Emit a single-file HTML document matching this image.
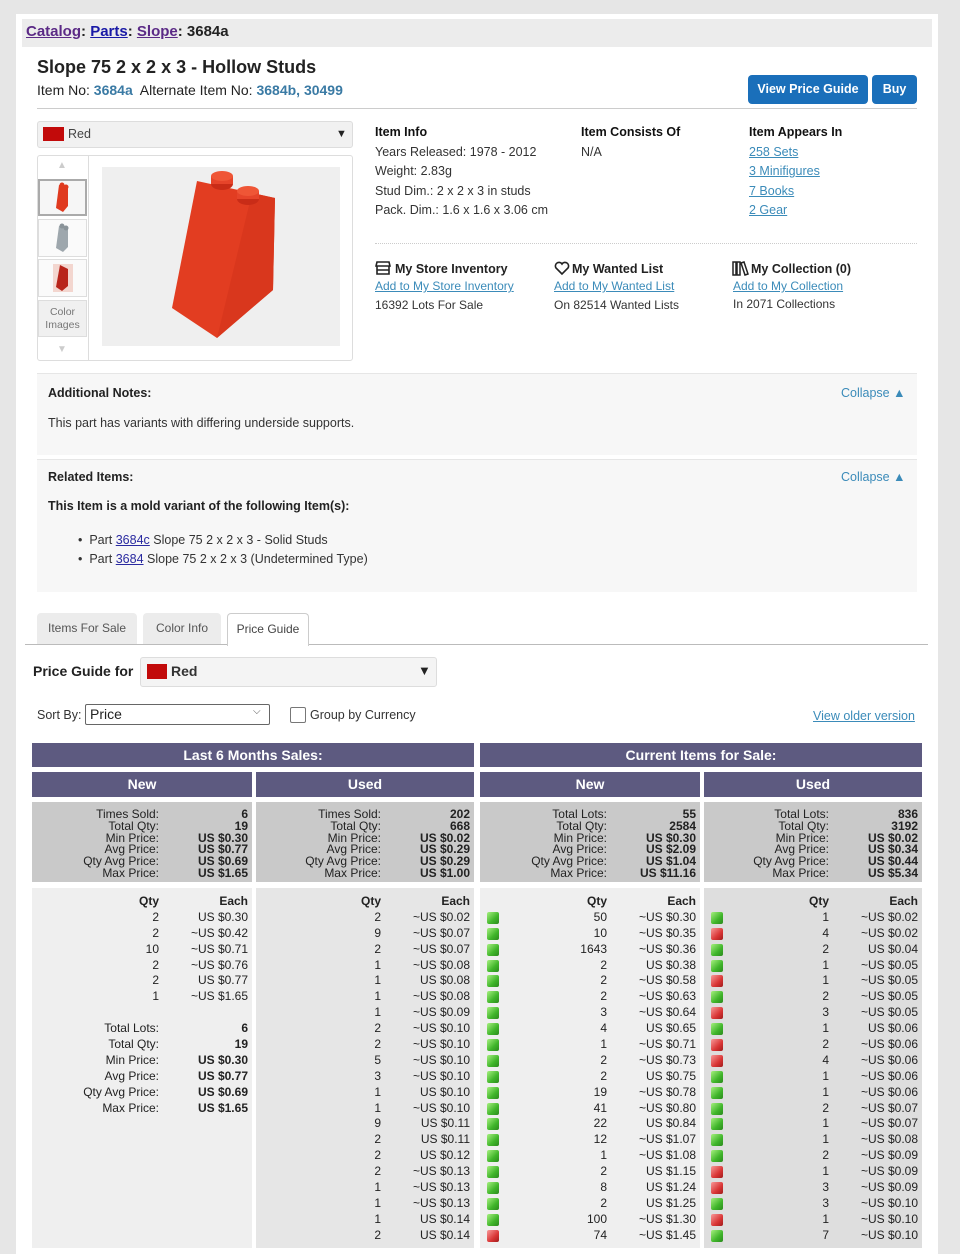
<!DOCTYPE html>
<html><head><meta charset="utf-8">
<style>
*{margin:0;padding:0;box-sizing:border-box}
body{width:960px;height:1245px;background:#e6e6e6;font-family:"Liberation Sans",sans-serif;color:#222;position:relative;overflow:hidden}
.a{position:absolute}
.wrap{position:absolute;left:16px;top:14px;width:922px;height:1240px;background:#fff}
.lk{color:#3b8bb9;text-decoration:underline}
.hd{position:absolute;background:#5d5a80;color:#fff;font-weight:bold;font-size:14px;text-align:center}
.sum{position:absolute;top:802px;height:80px;background:#c9c9c9;font-size:12px;line-height:11.8px;padding-top:7px}
.sum div{position:relative;height:11.8px}
.sum span{position:absolute;right:93px}
.sum b{position:absolute;right:4px}
.det{position:absolute;top:888px;height:360px;font-size:12px;padding-top:6px}
.r{position:relative;height:15.9px;line-height:15.9px}
.r .q{position:absolute;right:93px}
.r .e{position:absolute;right:4px}
.h{font-weight:bold}
.g,.x{position:absolute;left:7px;top:2px;width:12px;height:12px;border-radius:2px}
.g{background:linear-gradient(135deg,#a6f07f,#3fb52a 60%,#2c8a1e)}
.x{background:linear-gradient(135deg,#f89a9a,#d93535 60%,#a01d1d)}
.r b{font-weight:bold}
</style></head><body>
<div class="wrap"></div>
<div class="a" style="left:22px;top:19px;width:910px;height:28px;background:#ececec"></div>
<div class="a" style="left:26px;top:22px;font-size:15px;font-weight:bold;line-height:20px"><span style="color:#5b2a86;text-decoration:underline">Catalog</span>: <span style="color:#1a1aa6;text-decoration:underline">Parts</span>: <span style="color:#5b2a86;text-decoration:underline">Slope</span>: 3684a</div>
<div class="a" style="left:37px;top:57px;font-size:18px;font-weight:bold">Slope 75 2 x 2 x 3 - Hollow Studs</div>
<div class="a" style="left:37px;top:82px;font-size:14px">Item No: <b style="color:#3a7aa4">3684a</b>&nbsp; Alternate Item No: <b style="color:#3a7aa4">3684b, 30499</b></div>
<div class="a" style="left:748px;top:75px;width:120px;height:29px;background:#1a6fba;border-radius:4px;color:#fff;font-weight:bold;font-size:12.5px;text-align:center;line-height:29px">View Price Guide</div>
<div class="a" style="left:872px;top:75px;width:45px;height:29px;background:#1a6fba;border-radius:4px;color:#fff;font-weight:bold;font-size:12.5px;text-align:center;line-height:29px">Buy</div>
<div class="a" style="left:37px;top:108px;width:880px;height:1px;background:#ccc"></div>

<div class="a" style="left:37px;top:121px;width:316px;height:27px;background:#f1f1f1;border:1px solid #ddd;border-radius:3px"></div>
<div class="a" style="left:43px;top:127px;width:21px;height:14px;background:#c20a0a"></div>
<div class="a" style="left:68px;top:127px;font-size:12.5px;color:#444">Red</div>
<div class="a" style="left:336px;top:128px;font-size:11px">▼</div>

<div class="a" style="left:37px;top:155px;width:316px;height:206px;border:1px solid #ddd;border-radius:3px"></div>
<div class="a" style="left:88px;top:156px;width:1px;height:204px;background:#ddd"></div>
<div class="a" style="left:57px;top:160px;font-size:10px;color:#ccc">▲</div>
<div class="a" style="left:57px;top:344px;font-size:10px;color:#ccc">▼</div>
<div class="a" style="left:38px;top:179px;width:49px;height:37px;border:2px solid #aaa;background:#f6f6f6"></div>
<svg class="a" style="left:53px;top:182px" width="20" height="32"><polygon points="6,3 15,5 15,24 10,30 3,26" fill="#e03a1f"/><circle cx="9" cy="3" r="2.5" fill="#e03a1f"/><circle cx="13" cy="5" r="2.5" fill="#e03a1f"/></svg>
<div class="a" style="left:38px;top:219px;width:49px;height:38px;border:1px solid #ddd;background:#fafafa"></div>
<svg class="a" style="left:53px;top:222px" width="20" height="32"><polygon points="6,4 15,6 15,25 10,30 3,26" fill="#9ea7ad"/><circle cx="9" cy="4" r="2.5" fill="#8a9399"/><circle cx="13" cy="6" r="2.5" fill="#8a9399"/></svg>
<div class="a" style="left:38px;top:259px;width:49px;height:38px;border:1px solid #ddd;background:#fafafa"></div>
<svg class="a" style="left:52px;top:262px" width="22" height="32"><rect x="1" y="2" width="20" height="28" fill="#f3d6cf"/><polygon points="8,3 16,7 16,24 10,29 4,25" fill="#b8241a"/></svg>
<div class="a" style="left:38px;top:300px;width:49px;height:37px;border:1px solid #ddd;background:#f0f0f0;font-size:10.5px;color:#777;text-align:center;line-height:13px;padding-top:5px">Color<br>Images</div>
<svg class="a" style="left:102px;top:167px" width="238" height="179"><rect width="238" height="179" fill="#efefef"/>
<polygon points="95,14 173,31 171,123 115,171 70,141" fill="#e23d21"/>
<polygon points="150,26 173,31 171,123 115,171" fill="#d9371d"/>
<ellipse cx="120" cy="17" rx="11" ry="6" fill="#c92c17"/><rect x="109" y="9" width="22" height="8" fill="#e6442a"/><ellipse cx="120" cy="9" rx="11" ry="5" fill="#ef5636"/>
<ellipse cx="146" cy="32" rx="11" ry="6" fill="#c92c17"/><rect x="135" y="24" width="22" height="8" fill="#e6442a"/><ellipse cx="146" cy="24" rx="11" ry="5" fill="#ef5636"/>
</svg>

<div class="a" style="left:375px;top:123px;font-size:12.5px;line-height:19.6px;color:#333"><b style="color:#111">Item Info</b><br>Years Released: 1978 - 2012<br>Weight: 2.83g<br>Stud Dim.: 2 x 2 x 3 in studs<br>Pack. Dim.: 1.6 x 1.6 x 3.06 cm</div>
<div class="a" style="left:581px;top:123px;font-size:12.5px;line-height:19.6px;color:#333"><b style="color:#111">Item Consists Of</b><br>N/A</div>
<div class="a" style="left:749px;top:123px;font-size:12.5px;line-height:19.6px"><b style="color:#111">Item Appears In</b><br><span class="lk">258 Sets</span><br><span class="lk">3 Minifigures</span><br><span class="lk">7 Books</span><br><span class="lk">2 Gear</span></div>
<div class="a" style="left:375px;top:243px;width:542px;border-top:1px dotted #ccc"></div>

<svg class="a" style="left:375px;top:260px" width="16" height="16" fill="none" stroke="#222" stroke-width="1.6"><path d="M2 2h12l1 4H1z M2 6v8h12V6 M2 10h12"/></svg>
<div class="a" style="left:395px;top:262px;font-size:12.5px;font-weight:bold">My Store Inventory</div>
<div class="a lk" style="left:375px;top:279px;font-size:12px">Add to My Store Inventory</div>
<div class="a" style="left:375px;top:298px;font-size:12px;color:#333">16392 Lots For Sale</div>
<svg class="a" style="left:554px;top:261px" width="16" height="15" fill="none" stroke="#222" stroke-width="1.6"><path d="M8 13L2 7a3.3 3.3 0 0 1 6-4 3.3 3.3 0 0 1 6 4z"/></svg>
<div class="a" style="left:572px;top:262px;font-size:12.5px;font-weight:bold">My Wanted List</div>
<div class="a lk" style="left:554px;top:279px;font-size:12px">Add to My Wanted List</div>
<div class="a" style="left:554px;top:298px;font-size:12px;color:#333">On 82514 Wanted Lists</div>
<svg class="a" style="left:732px;top:260px" width="17" height="16" fill="none" stroke="#222" stroke-width="1.5"><path d="M1 2h3v13H1z M5 2h3v13H5z M9 3l3-1 4 12-3 1z"/></svg>
<div class="a" style="left:751px;top:262px;font-size:12.5px;font-weight:bold">My Collection (0)</div>
<div class="a lk" style="left:733px;top:279px;font-size:12px">Add to My Collection</div>
<div class="a" style="left:733px;top:297px;font-size:12px;color:#333">In 2071 Collections</div>

<div class="a" style="left:37px;top:373px;width:880px;height:82px;background:#f7f7f7;border-top:1px solid #e6e6e6"></div>
<div class="a" style="left:48px;top:386px;font-size:12.5px;font-weight:bold">Additional Notes:</div>
<div class="a" style="left:841px;top:386px;font-size:12.5px;color:#3b8bb9">Collapse ▲</div>
<div class="a" style="left:48px;top:416px;font-size:12.5px;color:#333">This part has variants with differing underside supports.</div>
<div class="a" style="left:37px;top:459px;width:880px;height:133px;background:#f7f7f7;border-top:1px solid #e6e6e6"></div>
<div class="a" style="left:48px;top:470px;font-size:12.5px;font-weight:bold">Related Items:</div>
<div class="a" style="left:841px;top:470px;font-size:12.5px;color:#3b8bb9">Collapse ▲</div>
<div class="a" style="left:48px;top:499px;font-size:12.5px;font-weight:bold">This Item is a mold variant of the following Item(s):</div>
<div class="a" style="left:78px;top:531px;font-size:12.5px;line-height:19px;color:#333">•&nbsp; Part <span style="color:#2a2aa0;text-decoration:underline">3684c</span> Slope 75 2 x 2 x 3 - Solid Studs<br>•&nbsp; Part <span style="color:#2a2aa0;text-decoration:underline">3684</span> Slope 75 2 x 2 x 3 (Undetermined Type)</div>

<div class="a" style="left:25px;top:644px;width:903px;height:1px;background:#bbb"></div>
<div class="a" style="left:37px;top:613px;width:100px;height:31px;background:#ececec;border-radius:4px 4px 0 0;font-size:12px;color:#555;text-align:center;line-height:30px">Items For Sale</div>
<div class="a" style="left:143px;top:613px;width:78px;height:31px;background:#ececec;border-radius:4px 4px 0 0;font-size:12px;color:#555;text-align:center;line-height:30px">Color Info</div>
<div class="a" style="left:227px;top:613px;width:82px;height:33px;background:#fff;border:1px solid #ccc;border-bottom:none;border-radius:4px 4px 0 0;font-size:12px;color:#444;text-align:center;line-height:31px">Price Guide</div>

<div class="a" style="left:33px;top:663px;font-size:14px;font-weight:bold">Price Guide for</div>
<div class="a" style="left:140px;top:657px;width:297px;height:30px;background:#f4f4f4;border:1px solid #ddd;border-radius:3px"></div>
<div class="a" style="left:147px;top:664px;width:20px;height:15px;background:#c20a0a"></div>
<div class="a" style="left:171px;top:663px;font-size:14px;font-weight:bold;color:#333">Red</div>
<div class="a" style="left:418px;top:663px;font-size:13px">▼</div>
<div class="a" style="left:37px;top:708px;font-size:12.5px;color:#333">Sort By:</div>
<div class="a" style="left:85px;top:704px;width:185px;height:21px;border:1px solid #666;border-radius:2px;font-size:14px;padding-left:4px;line-height:19px">Price</div>
<div class="a" style="left:253px;top:706px;font-size:10px;color:#555">⌵</div>
<div class="a" style="left:290px;top:707px;width:16px;height:16px;border:1px solid #777;border-radius:2px"></div>
<div class="a" style="left:310px;top:708px;font-size:12.5px;color:#333">Group by Currency</div>
<div class="a lk" style="left:813px;top:709px;font-size:12.5px">View older version</div>

<div class="hd" style="left:32px;top:743px;width:442px;height:24px;line-height:24px">Last 6 Months Sales:</div>
<div class="hd" style="left:480px;top:743px;width:442px;height:24px;line-height:24px">Current Items for Sale:</div>
<div class="hd" style="left:32px;top:772px;width:220px;height:25px;line-height:25px">New</div>
<div class="hd" style="left:256px;top:772px;width:218px;height:25px;line-height:25px">Used</div>
<div class="hd" style="left:480px;top:772px;width:220px;height:25px;line-height:25px">New</div>
<div class="hd" style="left:704px;top:772px;width:218px;height:25px;line-height:25px">Used</div>

<div class="sum" style="left:32px;width:220px"><div><span>Times Sold:</span><b>6</b></div><div><span>Total Qty:</span><b>19</b></div><div><span>Min Price:</span><b>US $0.30</b></div><div><span>Avg Price:</span><b>US $0.77</b></div><div><span>Qty Avg Price:</span><b>US $0.69</b></div><div><span>Max Price:</span><b>US $1.65</b></div></div>
<div class="sum" style="left:256px;width:218px"><div><span>Times Sold:</span><b>202</b></div><div><span>Total Qty:</span><b>668</b></div><div><span>Min Price:</span><b>US $0.02</b></div><div><span>Avg Price:</span><b>US $0.29</b></div><div><span>Qty Avg Price:</span><b>US $0.29</b></div><div><span>Max Price:</span><b>US $1.00</b></div></div>
<div class="sum" style="left:480px;width:220px"><div><span>Total Lots:</span><b>55</b></div><div><span>Total Qty:</span><b>2584</b></div><div><span>Min Price:</span><b>US $0.30</b></div><div><span>Avg Price:</span><b>US $2.09</b></div><div><span>Qty Avg Price:</span><b>US $1.04</b></div><div><span>Max Price:</span><b>US $11.16</b></div></div>
<div class="sum" style="left:704px;width:218px"><div><span>Total Lots:</span><b>836</b></div><div><span>Total Qty:</span><b>3192</b></div><div><span>Min Price:</span><b>US $0.02</b></div><div><span>Avg Price:</span><b>US $0.34</b></div><div><span>Qty Avg Price:</span><b>US $0.44</b></div><div><span>Max Price:</span><b>US $5.34</b></div></div>

<div class="det" style="left:32px;width:220px;background:#efefef">
<div class="r h"><span class="q">Qty</span><span class="e">Each</span></div>
<div class="r"><span class="q">2</span><span class="e">US $0.30</span></div>
<div class="r"><span class="q">2</span><span class="e">~US $0.42</span></div>
<div class="r"><span class="q">10</span><span class="e">~US $0.71</span></div>
<div class="r"><span class="q">2</span><span class="e">~US $0.76</span></div>
<div class="r"><span class="q">2</span><span class="e">US $0.77</span></div>
<div class="r"><span class="q">1</span><span class="e">~US $1.65</span></div>
<div class="r"></div>
<div class="r"><span class="q">Total Lots:</span><b class="e">6</b></div>
<div class="r"><span class="q">Total Qty:</span><b class="e">19</b></div>
<div class="r"><span class="q">Min Price:</span><b class="e">US $0.30</b></div>
<div class="r"><span class="q">Avg Price:</span><b class="e">US $0.77</b></div>
<div class="r"><span class="q">Qty Avg Price:</span><b class="e">US $0.69</b></div>
<div class="r"><span class="q">Max Price:</span><b class="e">US $1.65</b></div>
</div>

<div class="det" style="left:256px;width:218px;background:#e6e6e6">
<div class="r h"><span class="q">Qty</span><span class="e">Each</span></div>
<div class="r"><span class="q">2</span><span class="e">~US $0.02</span></div>
<div class="r"><span class="q">9</span><span class="e">~US $0.07</span></div>
<div class="r"><span class="q">2</span><span class="e">~US $0.07</span></div>
<div class="r"><span class="q">1</span><span class="e">~US $0.08</span></div>
<div class="r"><span class="q">1</span><span class="e">US $0.08</span></div>
<div class="r"><span class="q">1</span><span class="e">~US $0.08</span></div>
<div class="r"><span class="q">1</span><span class="e">~US $0.09</span></div>
<div class="r"><span class="q">2</span><span class="e">~US $0.10</span></div>
<div class="r"><span class="q">2</span><span class="e">~US $0.10</span></div>
<div class="r"><span class="q">5</span><span class="e">~US $0.10</span></div>
<div class="r"><span class="q">3</span><span class="e">~US $0.10</span></div>
<div class="r"><span class="q">1</span><span class="e">US $0.10</span></div>
<div class="r"><span class="q">1</span><span class="e">~US $0.10</span></div>
<div class="r"><span class="q">9</span><span class="e">US $0.11</span></div>
<div class="r"><span class="q">2</span><span class="e">US $0.11</span></div>
<div class="r"><span class="q">2</span><span class="e">US $0.12</span></div>
<div class="r"><span class="q">2</span><span class="e">~US $0.13</span></div>
<div class="r"><span class="q">1</span><span class="e">~US $0.13</span></div>
<div class="r"><span class="q">1</span><span class="e">~US $0.13</span></div>
<div class="r"><span class="q">1</span><span class="e">US $0.14</span></div>
<div class="r"><span class="q">2</span><span class="e">US $0.14</span></div>
</div>

<div class="det" style="left:480px;width:220px;background:#efefef">
<div class="r h"><span class="q">Qty</span><span class="e">Each</span></div>
<div class="r"><i class="g"></i><span class="q">50</span><span class="e">~US $0.30</span></div>
<div class="r"><i class="g"></i><span class="q">10</span><span class="e">~US $0.35</span></div>
<div class="r"><i class="g"></i><span class="q">1643</span><span class="e">~US $0.36</span></div>
<div class="r"><i class="g"></i><span class="q">2</span><span class="e">US $0.38</span></div>
<div class="r"><i class="g"></i><span class="q">2</span><span class="e">~US $0.58</span></div>
<div class="r"><i class="g"></i><span class="q">2</span><span class="e">~US $0.63</span></div>
<div class="r"><i class="g"></i><span class="q">3</span><span class="e">~US $0.64</span></div>
<div class="r"><i class="g"></i><span class="q">4</span><span class="e">US $0.65</span></div>
<div class="r"><i class="g"></i><span class="q">1</span><span class="e">~US $0.71</span></div>
<div class="r"><i class="g"></i><span class="q">2</span><span class="e">~US $0.73</span></div>
<div class="r"><i class="g"></i><span class="q">2</span><span class="e">US $0.75</span></div>
<div class="r"><i class="g"></i><span class="q">19</span><span class="e">~US $0.78</span></div>
<div class="r"><i class="g"></i><span class="q">41</span><span class="e">~US $0.80</span></div>
<div class="r"><i class="g"></i><span class="q">22</span><span class="e">US $0.84</span></div>
<div class="r"><i class="g"></i><span class="q">12</span><span class="e">~US $1.07</span></div>
<div class="r"><i class="g"></i><span class="q">1</span><span class="e">~US $1.08</span></div>
<div class="r"><i class="g"></i><span class="q">2</span><span class="e">US $1.15</span></div>
<div class="r"><i class="g"></i><span class="q">8</span><span class="e">US $1.24</span></div>
<div class="r"><i class="g"></i><span class="q">2</span><span class="e">US $1.25</span></div>
<div class="r"><i class="g"></i><span class="q">100</span><span class="e">~US $1.30</span></div>
<div class="r"><i class="x"></i><span class="q">74</span><span class="e">~US $1.45</span></div>
</div>

<div class="det" style="left:704px;width:218px;background:#dedede">
<div class="r h"><span class="q">Qty</span><span class="e">Each</span></div>
<div class="r"><i class="g"></i><span class="q">1</span><span class="e">~US $0.02</span></div>
<div class="r"><i class="x"></i><span class="q">4</span><span class="e">~US $0.02</span></div>
<div class="r"><i class="g"></i><span class="q">2</span><span class="e">US $0.04</span></div>
<div class="r"><i class="g"></i><span class="q">1</span><span class="e">~US $0.05</span></div>
<div class="r"><i class="x"></i><span class="q">1</span><span class="e">~US $0.05</span></div>
<div class="r"><i class="g"></i><span class="q">2</span><span class="e">~US $0.05</span></div>
<div class="r"><i class="x"></i><span class="q">3</span><span class="e">~US $0.05</span></div>
<div class="r"><i class="g"></i><span class="q">1</span><span class="e">US $0.06</span></div>
<div class="r"><i class="x"></i><span class="q">2</span><span class="e">~US $0.06</span></div>
<div class="r"><i class="x"></i><span class="q">4</span><span class="e">~US $0.06</span></div>
<div class="r"><i class="g"></i><span class="q">1</span><span class="e">~US $0.06</span></div>
<div class="r"><i class="g"></i><span class="q">1</span><span class="e">~US $0.06</span></div>
<div class="r"><i class="g"></i><span class="q">2</span><span class="e">~US $0.07</span></div>
<div class="r"><i class="g"></i><span class="q">1</span><span class="e">~US $0.07</span></div>
<div class="r"><i class="g"></i><span class="q">1</span><span class="e">~US $0.08</span></div>
<div class="r"><i class="g"></i><span class="q">2</span><span class="e">~US $0.09</span></div>
<div class="r"><i class="x"></i><span class="q">1</span><span class="e">~US $0.09</span></div>
<div class="r"><i class="x"></i><span class="q">3</span><span class="e">~US $0.09</span></div>
<div class="r"><i class="g"></i><span class="q">3</span><span class="e">~US $0.10</span></div>
<div class="r"><i class="x"></i><span class="q">1</span><span class="e">~US $0.10</span></div>
<div class="r"><i class="g"></i><span class="q">7</span><span class="e">~US $0.10</span></div>
</div>
</body></html>
